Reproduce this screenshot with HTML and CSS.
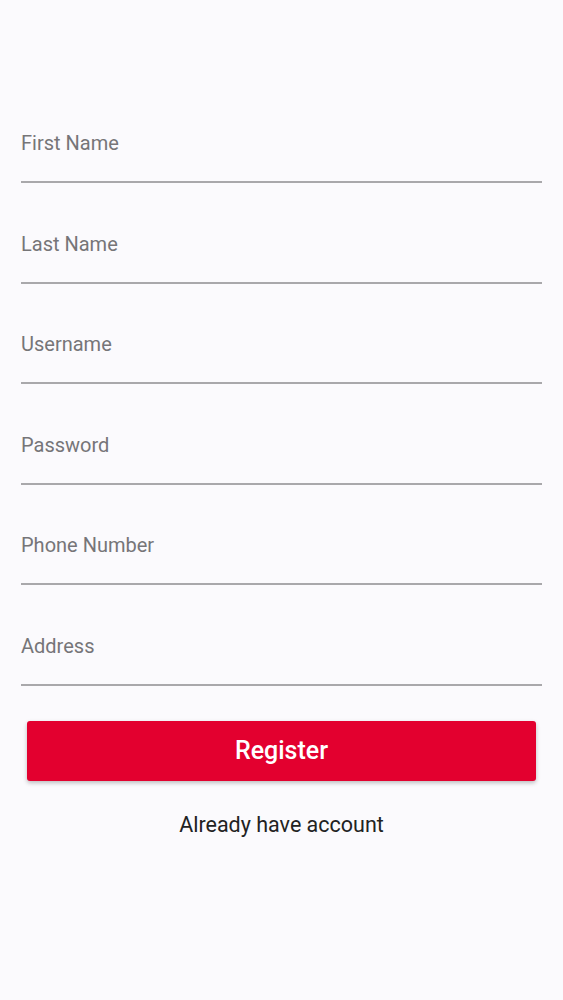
FILE: index.html
```html
<!doctype html>
<html>
<head>
    <title>Register</title>
    <meta charset="utf-8">
    <link rel="stylesheet" href="styles.css">
</head><body>
    <form class="register">
        <div class="field"><input type="text" placeholder="First Name"></div>
        <div class="field"><input type="text" placeholder="Last Name"></div>
        <div class="field"><input type="text" placeholder="Username"></div>
        <div class="field"><input type="password" placeholder="Password"></div>
        <div class="field"><input type="tel" placeholder="Phone Number"></div>
        <div class="field"><input type="text" placeholder="Address"></div>
        <button type="button" class="submit">Register</button>
        <p class="login"><a href="#">Already have account</a></p>
    </form>
</body></html>
```

FILE: styles.css
```css
body {
    margin: 0;
    padding: 0;
    background: #fbfafd;
    font: 20px 'Roboto', sans-serif;
    color: #222;
}

.register {
    display: flex;
    flex-direction: column;
    padding: 82.4px 21px 0;
}

.field {
    padding: 48.6px 0 26px;
    border-bottom: 2px solid #a9a8ab;
}

.field input {
    display: block;
    width: 100%;
    height: 24px;
    padding: 0;
    margin: 0;
    border: none;
    outline: none;
    background: transparent;
    font: 20px 'Roboto', sans-serif;
    line-height: 24px;
    color: #333;
}

.field input::placeholder {
    color: #767578;
}

.submit {
    display: flex;
    align-items: center;
    justify-content: center;
    height: 60px;
    margin: 35px 6px 0;
    padding: 0;
    border: none;
    border-radius: 3px;
    background: #e3002f;
    box-shadow: 0 2px 4px rgba(0,0,0,0.25);
    font: 500 25px 'Roboto', sans-serif;
    color: #fff;
}

.login {
    margin: 32.5px 0 0;
    text-align: center;
    font-size: 21.5px;
    line-height: 24px;
}

.login a {
    color: #222;
    text-decoration: none;
}
```
